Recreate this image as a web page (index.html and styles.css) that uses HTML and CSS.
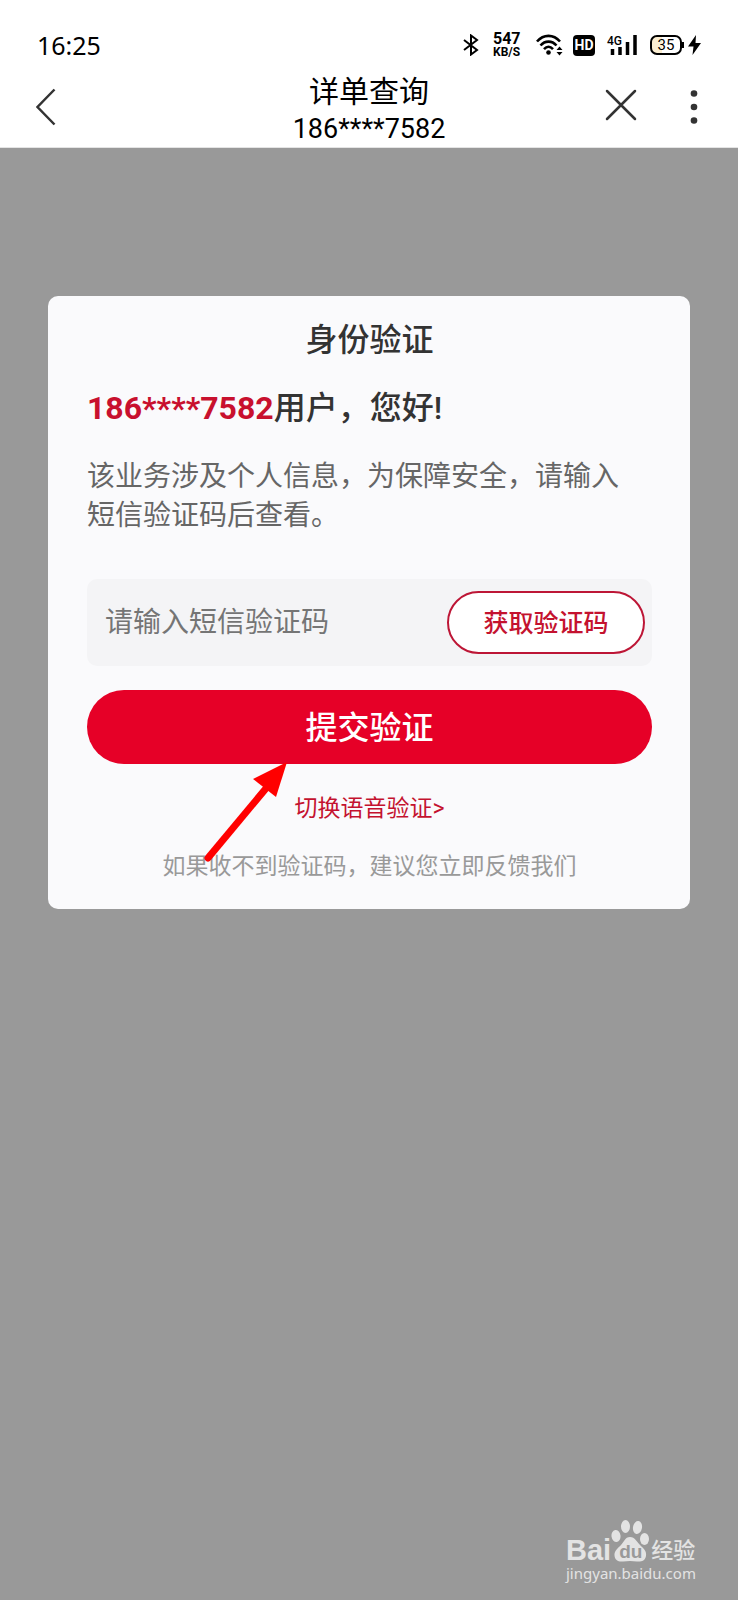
FILE: index.html
```html
<!DOCTYPE html>
<html lang="zh-CN">
<head>
<meta charset="utf-8">
<meta name="viewport" content="width=device-width, initial-scale=1">
<title>详单查询</title>
<link rel="stylesheet" href="styles.css">
</head>
<body>
<div class="page">
  <header class="header">
    <div class="status">
      <span class="clock">16:25</span>
      <div class="indicators">
        <svg class="bluetooth" width="16" height="22" viewBox="0 0 16 22" fill="none" stroke="#000" stroke-width="2"><path d="M1 6l13 10-6 4.500V1.500L14 6 1 16"/></svg>
        <span class="speed"><b class="speed-value">547</b><b class="speed-unit">KB/S</b></span>
        <svg class="wifi" width="27" height="22" viewBox="0 0 27 22"><g fill="none" stroke="#000" stroke-width="2.600"><path d="M1 7.500C7.500 0 17.500 0 24 7.500"/><path d="M4.500 11.500C9 6.300 16 6.300 20.500 11.500"/><path d="M8 15.200C11 12 14 12 17 15.200"/></g><circle cx="12.500" cy="18.500" r="2.300"/><path d="M20.500 16l3-3.500 3 3.500zM20.500 18l3 3.500 3-3.500z"/></svg>
        <span class="hd">HD</span>
        <span class="signal"><span class="signal-type">4G</span><svg width="30" height="20" viewBox="0 0 30 20" stroke="#000" stroke-width="3.500"><path d="M5.500 14v6M13 12v8M20.500 7v13M28 0v20"/></svg></span>
        <span class="battery">35</span>
        <svg class="bolt" width="13" height="20" viewBox="0 0 13 20"><path d="M8 0L0 11.500h5.500L4.500 20 13 8H7.500z"/></svg>
      </div>
    </div>
    <nav class="nav">
      <button class="icon-button" type="button" aria-label="返回"><svg width="20" height="38" viewBox="0 0 20 38" fill="none" stroke="#333" stroke-width="2.500"><path d="M18.500 1.500L1.500 19l17 17.500"/></svg></button>
      <div class="heading">
        <h1 class="title">详单查询</h1>
        <p class="account">186****7582</p>
      </div>
      <div class="nav-actions">
        <button class="icon-button" type="button" aria-label="关闭"><svg width="32" height="36" viewBox="0 0 32 36" fill="none" stroke="#333" stroke-width="2.500" stroke-linecap="round"><path d="M2 2l28 28M30 2L2 30"/></svg></button>
        <button class="icon-button" type="button" aria-label="更多"><svg width="8" height="34" viewBox="0 0 8 34" fill="#333"><circle cx="4" cy="3.500" r="3.300"/><circle cx="4" cy="17" r="3.300"/><circle cx="4" cy="30.500" r="3.300"/></svg></button>
      </div>
    </nav>
  </header>

  <main class="backdrop">
    <form class="card">
      <h2 class="card-title">身份验证</h2>
      <p class="greeting"><span class="phone">186****7582</span>用户，您好!</p>
      <p class="notice">该业务涉及个人信息，为保障安全，请输入短信验证码后查看。</p>
      <div class="field">
        <input class="code" type="text" placeholder="请输入短信验证码" aria-label="短信验证码">
        <button class="get-code" type="button">获取验证码</button>
      </div>
      <button class="submit" type="button">提交验证</button>
      <a class="voice" href="#voice">切换语音验证&gt;</a>
      <p class="feedback">如果收不到验证码，建议您立即反馈我们</p>
      <svg class="arrow" width="90" height="106" viewBox="0 0 90 106" fill="#f00"><path d="M8 98L68 26" stroke="#f00" stroke-width="7" stroke-linecap="round"/><path d="M87 2L53 19l23 18z"/></svg>
    </form>

    <div class="watermark">
      <div class="brand">
        <span class="brand-latin">Bai</span>
        <span class="paw"><svg width="38" height="42" viewBox="0 0 38 42" fill="#e3e3e3"><ellipse cx="5" cy="16" rx="4.500" ry="6" transform="rotate(-8 5 16)"/><ellipse cx="14.500" cy="6.500" rx="4.500" ry="6.500"/><ellipse cx="26.500" cy="7.500" rx="4.500" ry="6.500" transform="rotate(10 26.500 7.500)"/><ellipse cx="33.500" cy="19" rx="4.500" ry="6"/><path d="M19 17c5 0 7 5 10 8s7 6 6 11-5 6-9 5.500c-5-.8-9-.8-14 0C7 42 4 40 3.500 35.500S7 28 10 25s4-8 9-8z"/></svg><span class="paw-text">du</span></span>
        <span class="brand-cn">经验</span>
      </div>
      <span class="site">jingyan.baidu.com</span>
    </div>
  </main>
</div>
</body>
</html>
```
FILE: styles.css
```css
* {
  box-sizing: border-box;
}

body,
h1,
h2,
p {
  margin: 0;
}

body {
  font-family: Roboto, "Noto Sans CJK SC", sans-serif;
  color: #333;
}

button,
input {
  font-family: inherit;
  border: 0;
  padding: 0;
}

.page {
  display: flex;
  flex-direction: column;
  min-height: 100vh;
}

.header {
  background: #fff;
  color: #000;
}

.status {
  display: flex;
  align-items: center;
  justify-content: space-between;
  height: 66px;
  padding: 24px 37px 0;
}

.clock {
  font: 25px/30px "Noto Sans", sans-serif;
}

.indicators {
  display: flex;
  align-items: center;
}

.speed {
  display: flex;
  flex-direction: column;
  width: 27px;
  margin: 0 16px 0 14px;
}

.speed-value {
  font-size: 16px;
  line-height: 14px;
}

.speed-unit {
  font-size: 12px;
  line-height: 12px;
}

.hd {
  width: 22px;
  margin: 0 12px 0 10px;
  border-radius: 4px;
  background: #000;
  color: #fff;
  font-size: 14px;
  font-weight: 700;
  line-height: 21px;
  text-align: center;
}

.signal {
  position: relative;
  display: flex;
}

.signal-type {
  position: absolute;
  top: 0;
  left: 0;
  font-size: 12px;
  font-weight: 500;
  line-height: 12px;
}

.battery {
  position: relative;
  width: 32px;
  margin: 0 6px 0 13px;
  border: 2px solid #000;
  border-radius: 7px;
  background: linear-gradient(90deg, #fbeed2 35%, #fff 35%);
  font-size: 15px;
  line-height: 16px;
  text-align: center;
}

.battery::after {
  content: "";
  position: absolute;
  top: 5px;
  right: -4px;
  width: 2px;
  height: 6px;
  background: #000;
}

.nav {
  display: grid;
  grid-template-columns: 1fr auto 1fr;
  align-items: center;
  height: 82px;
  padding: 0 36px;
  border-bottom: 1px solid #e4e4e4;
}

.icon-button {
  display: flex;
  justify-self: start;
  background: none;
}

.heading {
  align-self: end;
  text-align: center;
}

.title {
  font-size: 30px;
  font-weight: 400;
  line-height: 38px;
}

.account {
  font-size: 27px;
  line-height: 36px;
}

.nav-actions {
  display: flex;
  justify-content: flex-end;
  align-items: center;
  gap: 53px;
  padding-right: 4px;
}

.backdrop {
  display: flex;
  flex: 1;
  flex-direction: column;
  padding: 148px 48px 16px;
  background: #999;
}

.card {
  position: relative;
  display: flex;
  flex-direction: column;
  padding: 22px 38px 27px 39px;
  border-radius: 10px;
  background: #fafafc;
}

.card-title {
  font-size: 32px;
  font-weight: 500;
  line-height: 44px;
  text-align: center;
}

.greeting {
  margin-top: 24px;
  font-size: 32px;
  font-weight: 500;
  line-height: 44px;
}

.phone {
  color: #c8102e;
  font-weight: 700;
}

.notice {
  margin-top: 27px;
  padding-right: 12px;
  color: #666;
  font-size: 28px;
  line-height: 39px;
}

.field {
  display: flex;
  align-items: center;
  height: 87px;
  margin-top: 44px;
  padding: 0 7px 0 18px;
  border-radius: 10px;
  background: #f4f4f6;
}

.code {
  flex: 1;
  min-width: 0;
  background: none;
  font-size: 28px;
  line-height: 40px;
}

.code::placeholder {
  color: #757575;
}

.get-code {
  width: 198px;
  height: 63px;
  padding-bottom: 4px;
  border: 2px solid #bd1636;
  border-radius: 32px;
  background: #fff;
  color: #c4122f;
  font-size: 25px;
  font-weight: 500;
}

.submit {
  height: 74px;
  margin-top: 24px;
  padding-bottom: 4px;
  border-radius: 37px;
  background: #e60027;
  color: #fff;
  font-size: 32px;
  font-weight: 500;
}

.voice {
  align-self: center;
  margin-top: 30px;
  color: #c4122f;
  font-size: 23px;
  line-height: 30px;
  text-decoration: none;
}

.feedback {
  margin-top: 28px;
  color: #999;
  font-size: 23px;
  line-height: 30px;
  text-align: center;
}

.arrow {
  position: absolute;
  top: 464px;
  left: 152px;
}

.watermark {
  align-self: flex-end;
  width: 124px;
  margin-top: auto;
  color: #e3e3e3;
}

.brand {
  display: flex;
  align-items: flex-end;
}

.brand-latin {
  font: bold 29px/24px "Liberation Sans", sans-serif;
}

.paw {
  position: relative;
  display: flex;
}

.paw-text {
  position: absolute;
  bottom: 0;
  left: 8px;
  color: #999;
  font: bold 19px/20px "Liberation Sans", sans-serif;
}

.brand-cn {
  margin-left: 2px;
  font-size: 22px;
  font-weight: 500;
  line-height: 22px;
  white-space: nowrap;
}

.site {
  display: block;
  font: 15px/22px "Noto Sans", sans-serif;
}
```
